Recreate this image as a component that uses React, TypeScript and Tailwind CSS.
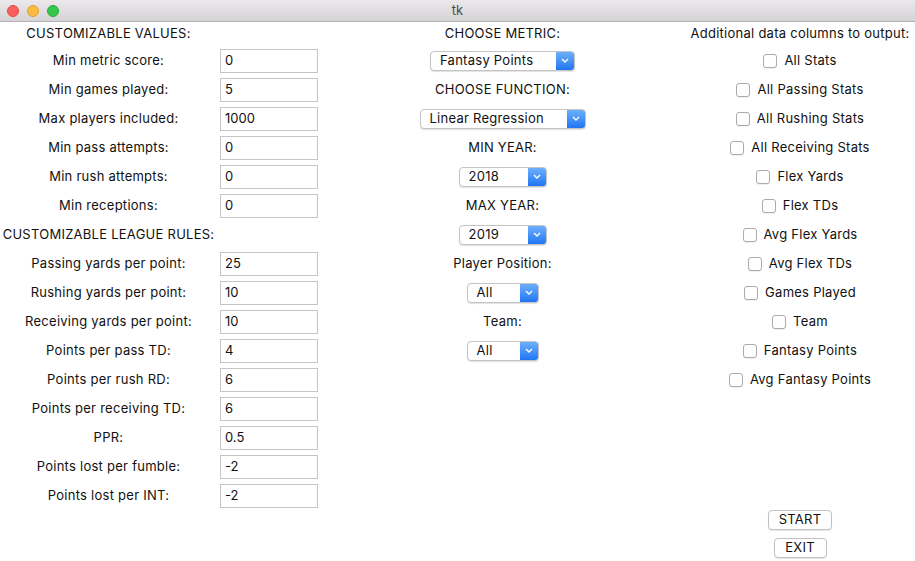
import React from 'react';

const font = { fontFamily: 'Inter, "Liberation Sans", sans-serif' };

function Label({ text }: { text: string }) {
  return (
    <div className="flex items-center justify-center text-[13px] tracking-[0.02em] text-[#111] whitespace-nowrap">
      {text}
    </div>
  );
}

function Entry({ value }: { value: string }) {
  return (
    <div className="flex items-center">
      <div className="ml-[3px] w-[98px] h-[24px] border border-[#c6c6c6] bg-white flex items-center pl-[4px] text-[13px] text-[#111]">
        {value}
      </div>
    </div>
  );
}

function Dropdown({ text, width }: { text: string; width: string }) {
  return (
    <div className="flex items-center justify-center">
      <div
        className={`${width} h-[20px] flex rounded-[4px] border border-[#c4c4c4] bg-white shadow-[0_1px_1px_rgba(0,0,0,0.12)] overflow-hidden`}
      >
        <div className="flex-1 flex items-center pl-[9px] text-[13px] text-[#111] tracking-[0.02em]">{text}</div>
        <div className="w-[18px] h-full flex items-center justify-center bg-gradient-to-b from-[#6cb0fb] to-[#1f74f3]">
          <svg width="8" height="5" viewBox="0 0 8 5">
            <path d="M1 1 L4 4 L7 1" fill="none" stroke="white" strokeWidth="1.4" />
          </svg>
        </div>
      </div>
    </div>
  );
}

function Check({ text }: { text: string }) {
  return (
    <div className="flex items-center justify-center">
      <div className="flex items-center gap-[7px]">
        <div className="w-[14px] h-[14px] rounded-[3px] border border-[#ababab] bg-white shadow-[0_1px_0_rgba(0,0,0,0.06)]" />
        <span className="text-[13px] text-[#111] tracking-[0.02em] whitespace-nowrap">{text}</span>
      </div>
    </div>
  );
}

function Btn({ text, width }: { text: string; width: string }) {
  return (
    <div className="flex items-start justify-center">
      <div
        className={`${width} h-[20px] rounded-[4px] border border-[#c2c2c2] bg-white shadow-[0_1px_1px_rgba(0,0,0,0.1)] flex items-center justify-center text-[13px] text-[#111] tracking-[0.02em]`}
      >
        {text}
      </div>
    </div>
  );
}

const Empty = () => <div />;

export default function App() {
  const rows: React.ReactNode[][] = [
    [<Label text="CUSTOMIZABLE VALUES:" />, <Empty />, <Label text="CHOOSE METRIC:" />, <Label text="Additional data columns to output:" />],
    [<Label text="Min metric score:" />, <Entry value="0" />, <Dropdown text="Fantasy Points" width="w-[145px]" />, <Check text="All Stats" />],
    [<Label text="Min games played:" />, <Entry value="5" />, <Label text="CHOOSE FUNCTION:" />, <Check text="All Passing Stats" />],
    [<Label text="Max players included:" />, <Entry value="1000" />, <Dropdown text="Linear Regression" width="w-[166px]" />, <Check text="All Rushing Stats" />],
    [<Label text="Min pass attempts:" />, <Entry value="0" />, <Label text="MIN YEAR:" />, <Check text="All Receiving Stats" />],
    [<Label text="Min rush attempts:" />, <Entry value="0" />, <Dropdown text="2018" width="w-[88px]" />, <Check text="Flex Yards" />],
    [<Label text="Min receptions:" />, <Entry value="0" />, <Label text="MAX YEAR:" />, <Check text="Flex TDs" />],
    [<Label text="CUSTOMIZABLE LEAGUE RULES:" />, <Empty />, <Dropdown text="2019" width="w-[88px]" />, <Check text="Avg Flex Yards" />],
    [<Label text="Passing yards per point:" />, <Entry value="25" />, <Label text="Player Position:" />, <Check text="Avg Flex TDs" />],
    [<Label text="Rushing yards per point:" />, <Entry value="10" />, <Dropdown text="All" width="w-[72px]" />, <Check text="Games Played" />],
    [<Label text="Receiving yards per point:" />, <Entry value="10" />, <Label text="Team:" />, <Check text="Team" />],
    [<Label text="Points per pass TD:" />, <Entry value="4" />, <Dropdown text="All" width="w-[72px]" />, <Check text="Fantasy Points" />],
    [<Label text="Points per rush RD:" />, <Entry value="6" />, <Empty />, <Check text="Avg Fantasy Points" />],
    [<Label text="Points per receiving TD:" />, <Entry value="6" />, <Empty />, <Empty />],
    [<Label text="PPR:" />, <Entry value="0.5" />, <Empty />, <Empty />],
    [<Label text="Points lost per fumble:" />, <Entry value="-2" />, <Empty />, <Empty />],
    [<Label text="Points lost per INT:" />, <Entry value="-2" />, <Empty />, <Empty />],
    [<Empty />, <Empty />, <Empty />, <Btn text="START" width="w-[64px]" />],
    [<Empty />, <Empty />, <Empty />, <Btn text="EXIT" width="w-[53px]" />],
  ];

  return (
    <div className="w-[915px] h-[561px] bg-white flex flex-col overflow-hidden" style={font}>
      {/* title bar */}
      <div className="h-[22px] shrink-0 relative flex items-center justify-center bg-gradient-to-b from-[#ebe9eb] to-[#d5d3d5] border-b border-[#b3b1b3]">
        <div className="absolute left-[7px] top-[5px] flex gap-[8px]">
          <div className="w-[12px] h-[12px] rounded-full bg-[#fc605c] border border-[#de4a46]" />
          <div className="w-[12px] h-[12px] rounded-full bg-[#fdbc40] border border-[#dea034]" />
          <div className="w-[12px] h-[12px] rounded-full bg-[#34c84a] border border-[#27aa35]" />
        </div>
        <span className="text-[13px] text-[#4a4a4a]">tk</span>
      </div>

      <div className="grid grid-cols-[217px_103px_365px_230px] grid-rows-[24px_repeat(16,29px)_28px_28px]">
        {rows.map((r, i) => (
          <React.Fragment key={i}>
            {r.map((c, j) => (
              <React.Fragment key={j}>{c}</React.Fragment>
            ))}
          </React.Fragment>
        ))}
      </div>
    </div>
  );
}
